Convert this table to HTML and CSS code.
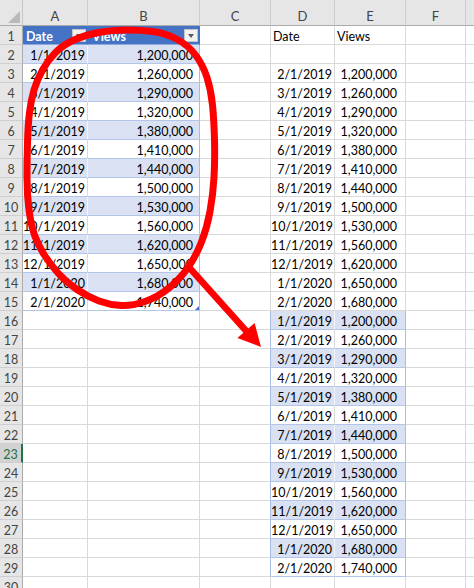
FILE: index.html
```html
<!DOCTYPE html>
<html lang="en">
<head>
<meta charset="utf-8">
<title>Sheet</title>
<link rel="stylesheet" href="styles.css">
</head>
<body>
<div class="sheet">
  <div class="grid">
    <div class="corner"><i class="tri"></i></div><div class="ch">A</div><div class="ch">B</div><div class="ch">C</div><div class="ch">D</div><div class="ch">E</div><div class="ch">F</div><div class="ch"></div>

    <div class="rh">1</div><div class="th in"><span>Date</span><span class="fb"></span></div><div class="th"><span class="pl">Views</span><span class="fb"></span></div><div></div><div class="lbl">Date</div><div class="lbl">Views</div><div></div><div></div>

    <div class="rh">2</div><div class="d t in bd">1/1/2019</div><div class="n t edge bd">1,200,000</div><div></div><div></div><div></div><div></div><div></div>
    <div class="rh">3</div><div class="d t in">2/1/2019</div><div class="n t edge">1,260,000</div><div></div><div class="d">2/1/2019</div><div class="ne">1,200,000</div><div></div><div></div>
    <div class="rh">4</div><div class="d t in bd">3/1/2019</div><div class="n t edge bd">1,290,000</div><div></div><div class="d">3/1/2019</div><div class="ne">1,260,000</div><div></div><div></div>
    <div class="rh">5</div><div class="d t in">4/1/2019</div><div class="n t edge">1,320,000</div><div></div><div class="d">4/1/2019</div><div class="ne">1,290,000</div><div></div><div></div>
    <div class="rh">6</div><div class="d t in bd">5/1/2019</div><div class="n t edge bd">1,380,000</div><div></div><div class="d">5/1/2019</div><div class="ne">1,320,000</div><div></div><div></div>
    <div class="rh">7</div><div class="d t in">6/1/2019</div><div class="n t edge">1,410,000</div><div></div><div class="d">6/1/2019</div><div class="ne">1,380,000</div><div></div><div></div>
    <div class="rh">8</div><div class="d t in bd">7/1/2019</div><div class="n t edge bd">1,440,000</div><div></div><div class="d">7/1/2019</div><div class="ne">1,410,000</div><div></div><div></div>
    <div class="rh">9</div><div class="d t in">8/1/2019</div><div class="n t edge">1,500,000</div><div></div><div class="d">8/1/2019</div><div class="ne">1,440,000</div><div></div><div></div>
    <div class="rh">10</div><div class="d t in bd">9/1/2019</div><div class="n t edge bd">1,530,000</div><div></div><div class="d">9/1/2019</div><div class="ne">1,500,000</div><div></div><div></div>
    <div class="rh">11</div><div class="d t in">10/1/2019</div><div class="n t edge">1,560,000</div><div></div><div class="d">10/1/2019</div><div class="ne">1,530,000</div><div></div><div></div>
    <div class="rh">12</div><div class="d t in bd">11/1/2019</div><div class="n t edge bd">1,620,000</div><div></div><div class="d">11/1/2019</div><div class="ne">1,560,000</div><div></div><div></div>
    <div class="rh">13</div><div class="d t in">12/1/2019</div><div class="n t edge">1,650,000</div><div></div><div class="d">12/1/2019</div><div class="ne">1,620,000</div><div></div><div></div>
    <div class="rh">14</div><div class="d t in bd">1/1/2020</div><div class="n t edge bd">1,680,000</div><div></div><div class="d">1/1/2020</div><div class="ne">1,650,000</div><div></div><div></div>
    <div class="rh">15</div><div class="d t in">2/1/2020</div><div class="n t edge last">1,740,000</div><div></div><div class="d">2/1/2020</div><div class="ne">1,680,000</div><div></div><div></div>

    <div class="rh">16</div><div></div><div></div><div class="edge"></div><div class="d t in bd">1/1/2019</div><div class="ne t edge bd">1,200,000</div><div></div><div></div>
    <div class="rh">17</div><div></div><div></div><div class="edge"></div><div class="d t in">2/1/2019</div><div class="ne t edge">1,260,000</div><div></div><div></div>
    <div class="rh">18</div><div></div><div></div><div class="edge"></div><div class="d t in bd">3/1/2019</div><div class="ne t edge bd">1,290,000</div><div></div><div></div>
    <div class="rh">19</div><div></div><div></div><div class="edge"></div><div class="d t in">4/1/2019</div><div class="ne t edge">1,320,000</div><div></div><div></div>
    <div class="rh">20</div><div></div><div></div><div class="edge"></div><div class="d t in bd">5/1/2019</div><div class="ne t edge bd">1,380,000</div><div></div><div></div>
    <div class="rh">21</div><div></div><div></div><div class="edge"></div><div class="d t in">6/1/2019</div><div class="ne t edge">1,410,000</div><div></div><div></div>
    <div class="rh">22</div><div></div><div></div><div class="edge"></div><div class="d t in bd">7/1/2019</div><div class="ne t edge bd">1,440,000</div><div></div><div></div>
    <div class="rh sel">23</div><div></div><div></div><div class="edge"></div><div class="d t in">8/1/2019</div><div class="ne t edge">1,500,000</div><div></div><div></div>
    <div class="rh">24</div><div></div><div></div><div class="edge"></div><div class="d t in bd">9/1/2019</div><div class="ne t edge bd">1,530,000</div><div></div><div></div>
    <div class="rh">25</div><div></div><div></div><div class="edge"></div><div class="d t in">10/1/2019</div><div class="ne t edge">1,560,000</div><div></div><div></div>
    <div class="rh">26</div><div></div><div></div><div class="edge"></div><div class="d t in bd">11/1/2019</div><div class="ne t edge bd">1,620,000</div><div></div><div></div>
    <div class="rh">27</div><div></div><div></div><div class="edge"></div><div class="d t in">12/1/2019</div><div class="ne t edge">1,650,000</div><div></div><div></div>
    <div class="rh">28</div><div></div><div></div><div class="edge"></div><div class="d t in bd">1/1/2020</div><div class="ne t edge bd">1,680,000</div><div></div><div></div>
    <div class="rh">29</div><div></div><div></div><div class="edge"></div><div class="d t in">2/1/2020</div><div class="ne t edge">1,740,000</div><div></div><div></div>
    <div class="rh">30</div><div></div><div></div><div></div><div></div><div></div><div></div><div></div>
  </div>

  <svg class="ink" width="474" height="588" viewBox="0 0 474 588" aria-hidden="true">
    <path class="ring" d="M126.5 30 Q141 30 153 31.5 Q165 33 176.5 39 Q188 45 195.5 55 Q203 65 207 77.5 Q211 90 212.5 105 Q214 120 214.5 140 Q215 160 214 177.5 Q213 195 210 211.5 Q207 228 201.5 242 Q196 256 188 267.5 Q180 279 169 288 Q158 297 145 301.5 Q132 306 121 305.5 Q110 305 99 301 Q88 297 77 289.5 Q66 282 58 273 Q50 264 44 254.5 Q38 245 34.5 235 Q31 225 29 210 Q27 195 27 177.5 Q27 160 27.5 142.5 Q28 125 29.5 112.5 Q31 100 34 90 Q37 80 42.5 70 Q48 60 55.5 52.5 Q63 45 74 40 Q85 35 98.5 32.5 Q112 30 126.5 30 Z"/>
    <line class="shaft" x1="187" y1="265" x2="248" y2="333"/>
    <polygon class="head" points="254.6,322.9 237.4,338.1 261,347"/>
  </svg>
</div>
</body>
</html>
```

FILE: styles.css
```css
html, body {
  margin: 0;
  padding: 0;
  background: #ffffff;
}

.sheet {
  position: relative;
  width: 474px;
  height: 588px;
  overflow: hidden;
  background: #ffffff;
  font-family: Lato, "Liberation Sans", sans-serif;
  color: #000000;
}

.grid {
  display: grid;
  grid-template-columns: 23px 65px 112px 71px 64px 71px 60px 60px;
  grid-template-rows: 26px;
  grid-auto-rows: 19px;
  width: 526px;
}

.grid > div {
  box-sizing: border-box;
  border-right: 1px solid #d9d9d9;
  border-bottom: 1px solid #d9d9d9;
  font-size: 12.5px;
  line-height: 18px;
  padding: 2px 0 0 0;
  white-space: nowrap;
}

/* headers */
.grid > .corner {
  background: #e6e6e6;
  border-right-color: #c6c6c6;
  border-bottom-color: #ababab;
  display: flex;
  align-items: flex-end;
  justify-content: flex-end;
  padding: 0 2px 2px 0;
}

.tri {
  display: block;
  width: 0;
  height: 0;
  border-left: 12px solid transparent;
  border-bottom: 12px solid #b9b9b9;
}

.grid > .ch {
  background: #e6e6e6;
  color: #444444;
  text-align: center;
  border-right-color: #cdcdcd;
  border-bottom-color: #ababab;
  line-height: 20px;
  padding-top: 6px;
  font-size: 13px;
}

.grid > .rh {
  background: #e6e6e6;
  color: #444444;
  text-align: center;
  border-right-color: #ababab;
  border-bottom-color: #cfcfcf;
}

.grid > .rh.sel {
  background: #d2d2d2;
  color: #217346;
  border-right: 2px solid #217346;
}

/* table header */
.grid > .th {
  background: #4472c4;
  color: #ffffff;
  font-weight: bold;
  border-right-color: #4472c4;
  border-bottom-color: #8ea9db;
  display: flex;
  justify-content: space-between;
  align-items: flex-start;
  padding: 2px 1px 0 3px;
}

.pl {
  padding-left: 1px;
}

.fb {
  box-sizing: border-box;
  width: 14px;
  height: 13px;
  margin-top: 1px;
  background: #f2f2f2;
  border: 1px solid #c4c4c4;
  display: flex;
  align-items: center;
  justify-content: center;
}

.fb::after {
  content: "";
  width: 0;
  height: 0;
  border-left: 3.5px solid transparent;
  border-right: 3.5px solid transparent;
  border-top: 4px solid #595959;
}

/* plain labels */
.grid > .lbl {
  padding-left: 2px;
}

/* values */
.grid > .d {
  text-align: right;
  padding-right: 2px;
}

.grid > .n {
  text-align: right;
  padding-right: 6px;
}

.grid > .ne {
  text-align: right;
  padding-right: 8px;
}

/* table bands */
.grid > .t {
  border-bottom-color: #b4c6e7;
}

.grid > .bd {
  background: #d9e1f2;
}

.grid > .bd.in {
  border-right-color: #f3f5fb;
}

.grid > .edge {
  border-right-color: #a9bde2;
}

.grid > .last {
  position: relative;
}

.grid > .last::after {
  content: "";
  position: absolute;
  right: 0;
  bottom: 0;
  width: 0;
  height: 0;
  border-left: 4px solid transparent;
  border-bottom: 4px solid #4472c4;
}

/* annotation overlay */
.ink {
  position: absolute;
  left: 0;
  top: 0;
  pointer-events: none;
}

.ring {
  fill: none;
  stroke: #ff0000;
  stroke-width: 7;
}

.shaft {
  stroke: #ff0000;
  stroke-width: 6.5;
}

.head {
  fill: #ff0000;
}
```
